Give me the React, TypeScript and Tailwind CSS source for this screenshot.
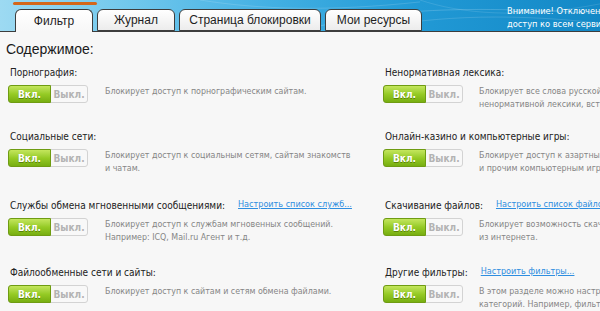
import React from "react";

const FONT = { fontFamily: '"DejaVu Sans Condensed", "DejaVu Sans", Tahoma, sans-serif' };
const UI = { fontFamily: '"Liberation Sans", Arial, sans-serif' };

function Toggle() {
  return (
    <div className="flex h-[18px] w-[80px] shrink-0 rounded-[3px] border border-[#d3d3d3] bg-[#f8f8f8]">
      <div className="flex h-full w-[41px] -ml-px -mt-px box-content items-center justify-center rounded-l-[3px] border border-[#6f9c12] bg-gradient-to-b from-[#c4e65c] via-[#96cb25] to-[#77ae10] text-[10px] font-bold text-white [text-shadow:0_1px_0_rgba(60,90,0,0.6)]">
        Вкл.
      </div>
      <div className="flex h-full flex-1 items-center justify-center text-[10px] font-bold text-[#b3b3b3]">
        Выкл.
      </div>
    </div>
  );
}

type Item = { label: string; link?: string; desc: string[]; h: string };

function Row({ item, descX }: { item: Item; descX: string }) {
  return (
    <div className={`flex flex-col ${item.h}`}>
      <div className="flex h-[16px] items-center gap-[13px] pl-[2px]">
        <span className="whitespace-nowrap text-[10px] text-[#222]">{item.label}</span>
        {item.link && (
          <span className="whitespace-nowrap text-[9px] text-[#2e8ee0] underline">{item.link}</span>
        )}
      </div>
      <div className="mt-[5px] flex">
        <Toggle />
        <div className={`${descX} text-[8.8px] leading-[13px] text-[#858585] whitespace-nowrap`}>
          {item.desc.map((d, i) => (
            <div key={i}>{d}</div>
          ))}
        </div>
      </div>
    </div>
  );
}

const left: Item[] = [
  { label: "Порнография:", desc: ["Блокирует доступ к порнографическим сайтам."], h: "h-[64px]" },
  { label: "Социальные сети:", desc: ["Блокирует доступ к социальным сетям, сайтам знакомств", "и чатам."], h: "h-[69px]" },
  {
    label: "Службы обмена мгновенными сообщениями:",
    link: "Настроить список служб...",
    desc: ["Блокирует доступ к службам мгновенных сообщений.", "Например: ICQ, Mail.ru Агент и т.д."],
    h: "h-[67px]",
  },
  { label: "Файлообменные сети и сайты:", desc: ["Блокирует доступ к сайтам и сетям обмена файлами."], h: "h-[67px]" },
];

const right: Item[] = [
  { label: "Ненормативная лексика:", desc: ["Блокирует все слова русской", "ненормативной лексики, встречающиеся"], h: "h-[64px]" },
  { label: "Онлайн-казино и компьютерные игры:", desc: ["Блокирует доступ к азартным играм", "и прочим компьютерным играм."], h: "h-[69px]" },
  {
    label: "Скачивание файлов:",
    link: "Настроить список файлов...",
    desc: ["Блокирует возможность скачивания файлов", "из интернета."],
    h: "h-[67px]",
  },
  {
    label: "Другие фильтры:",
    link: "Настроить фильтры...",
    desc: ["В этом разделе можно настроить фильтрацию по", "категорий. Например, фильтры по ключевым словам."],
    h: "h-[67px]",
  },
];

function Tab({ label, active, w }: { label: string; active?: boolean; w: string }) {
  return (
    <div
      style={UI}
      className={`${w} flex h-[22px] items-center justify-center rounded-t-[6px] border border-[#3d3d3d] text-[12px] text-[#1e1e1e] ${
        active
          ? "relative z-10 -mb-px h-[23px] border-b-0 bg-gradient-to-b from-[#ffffff] to-[#f7f7f7]"
          : "bg-gradient-to-b from-[#ffffff] to-[#ececec]"
      }`}
    >
      {label}
    </div>
  );
}

export default function App() {
  return (
    <div className="h-[311px] w-[600px] overflow-hidden bg-[#f7f7f7]" style={FONT}>
      <div className="relative flex h-[32px] items-end border-b border-[#3d3d3d] bg-[linear-gradient(90deg,#9ddaf2_0%,#74c9ed_20%,#43b0e3_45%,#2199d5_70%,#1388c6_100%)]">
        <svg className="absolute inset-0 h-full w-full" viewBox="0 0 600 32" preserveAspectRatio="none">
          <path d="M300 32 C 380 10, 450 5, 600 14" stroke="rgba(255,255,255,0.18)" fill="none" />
          <path d="M360 32 C 420 18, 500 12, 600 24" stroke="rgba(255,255,255,0.14)" fill="none" />
          <path d="M420 0 C 460 14, 520 20, 600 4" stroke="rgba(255,255,255,0.12)" fill="none" />
          <path d="M200 0 C 260 10, 330 12, 420 2" stroke="rgba(255,255,255,0.15)" fill="none" />
        </svg>
        <div className="absolute left-[13px] top-[2px] h-[3px] w-[84px] rounded-full bg-[#d4671a]" />
        <div className="relative flex items-end gap-[4px] pl-[15px]">
          <Tab label="Фильтр" active w="w-[78px]" />
          <Tab label="Журнал" w="w-[78px]" />
          <Tab label="Страница блокировки" w="w-[142px]" />
          <Tab label="Мои ресурсы" w="w-[97px]" />
        </div>
        <div className="relative ml-auto mb-[3px] w-[93px] self-start overflow-hidden whitespace-nowrap pt-[4px] text-[9.2px] leading-[13px] text-white">
          <div>Внимание! Отключение</div>
          <div>доступ ко всем сервисам</div>
        </div>
      </div>
      <div style={UI} className="pl-[6px] pt-[7px] text-[14px] leading-[20px] text-[#1a1a1a]">Содержимое:</div>
      <div className="grid grid-cols-[375px_1fr] pl-[8px] pt-[5px]">
        <div className="flex flex-col">
          {left.map((it, i) => (
            <Row key={i} item={it} descX="ml-[17px]" />
          ))}
        </div>
        <div className="flex flex-col">
          {right.map((it, i) => (
            <Row key={i} item={it} descX="ml-[16px]" />
          ))}
        </div>
      </div>
    </div>
  );
}
